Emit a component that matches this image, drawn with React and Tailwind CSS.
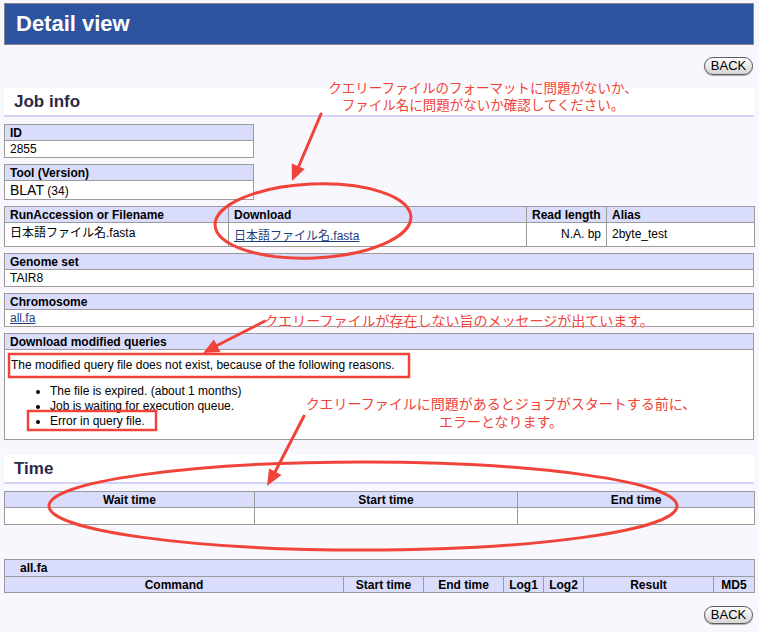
import React from 'react';

const th = 'border border-[#9b9b9b] bg-[#d9dcfa] text-[12px] font-bold text-black h-[16px] leading-[14px] p-0 align-middle';
const td = 'border border-[#9b9b9b] bg-white text-[12px] text-black h-[17px] leading-[14px] p-0 align-middle';
const red = 'text-[#f0443a] [text-shadow:0_0_2px_#fff,0_0_2px_#fff]';
const jp = "font-['Noto_Sans_CJK_JP',sans-serif]";

function SectionTitle({ children, className = '' }) {
  return (
    <div className={`bg-white border-b-2 border-[#d3d4f7] h-[29px] flex items-center pl-[10px] text-[17px] font-bold text-[#2a2a48] ${className}`}>
      {children}
    </div>
  );
}

function BackButton({ className = '' }) {
  return (
    <div className={`flex justify-end pr-[1px] ${className}`}>
      <button className="h-[18px] w-[49px] rounded-full border border-[#5c5c5c] bg-linear-to-b from-white to-[#d6d6d6] text-[13px] leading-[16px] text-black shadow-[0_1px_1px_rgba(0,0,0,0.3)]">
        BACK
      </button>
    </div>
  );
}

function Field({ label, children, wide = false, className = '', rowClass = '' }) {
  return (
    <table className={`border-collapse table-fixed ${wide ? 'w-[750px]' : 'w-[250px]'} ${className}`}>
      <tbody>
        <tr>
          <th className={`${th} text-left pl-[5px]`}>{label}</th>
        </tr>
        <tr>
          <td className={`${td} pl-[5px] ${rowClass}`}>{children}</td>
        </tr>
      </tbody>
    </table>
  );
}

function Annotations() {
  return (
    <>
      <svg className="absolute left-0 top-0 pointer-events-none" width="759" height="632" viewBox="0 0 759 632">
        <g fill="none" stroke="#f0443a" strokeWidth="3" strokeLinecap="round">
          <ellipse cx="313" cy="221" rx="98" ry="37" transform="rotate(-2.5 313 221)" />
          <ellipse cx="363" cy="506" rx="314" ry="44" />
          <line x1="321" y1="114" x2="298" y2="168" />
          <line x1="265" y1="321" x2="216" y2="346" />
          <line x1="304" y1="416" x2="275" y2="472" />
        </g>
        <g fill="#f0443a">
          <polygon points="292,181 304.7,168.9 291.7,163.5" />
          <polygon points="203,353 220.4,351.9 214,339.5" />
          <polygon points="267,486 281.5,475 269.1,468.6" />
        </g>
        <g fill="none" stroke="#f0443a" strokeWidth="2.5">
          <rect x="9" y="354" width="400" height="23" />
          <rect x="28" y="411" width="128" height="19" />
        </g>
      </svg>
      <div className={`absolute left-[283px] top-[79px] w-[400px] text-center text-[13.5px] leading-[17px] ${red} ${jp}`}>
        <div className="h-[17px]">クエリーファイルのフォーマットに問題がないか、</div>
        <div className="h-[17px]">ファイル名に問題がないか確認してください。</div>
      </div>
      <div className={`absolute left-[259px] top-[312px] w-[400px] text-center text-[14px] leading-[17px] ${red} ${jp}`}>
        クエリーファイルが存在しない旨のメッセージが出ています。
      </div>
      <div className={`absolute left-[301px] top-[394px] w-[400px] text-center text-[14px] leading-[18px] ${red} ${jp}`}>
        <div className="h-[18px]">クエリーファイルに問題があるとジョブがスタートする前に、</div>
        <div className="h-[18px]">エラーとなります。</div>
      </div>
    </>
  );
}

export default function App() {
  return (
    <div className="relative w-[759px] min-h-[632px] bg-[#f7f7fd] pt-[3px] font-['Liberation_Sans','Noto_Sans_CJK_JP',sans-serif] text-black">
      <div className="ml-[4px] w-[750px]">
        <div className="h-[42px] bg-[#2d52a0] border border-[#858585] flex items-center pl-[11px]">
          <h1 className="text-[22px] font-bold text-white leading-none">Detail view</h1>
        </div>

        <BackButton className="mt-[12px]" />

        <SectionTitle className="mt-[13px]">Job info</SectionTitle>

        <Field label="ID" className="mt-[7px]">2855</Field>

        <Field label="Tool (Version)" className="mt-[6px]" rowClass="!h-[19px]">
          <span className="text-[14px]">BLAT</span> <span className="text-[12px]">(34)</span>
        </Field>

        <table className="border-collapse table-fixed w-[750px] mt-[6px]">
          <colgroup>
            <col className="w-[224px]" />
            <col className="w-[298px]" />
            <col className="w-[80px]" />
            <col className="w-[148px]" />
          </colgroup>
          <tbody>
            <tr>
              <th className={`${th} text-left pl-[5px]`}>RunAccession or Filename</th>
              <th className={`${th} text-left pl-[5px]`}>Download</th>
              <th className={`${th} text-left pl-[5px]`}>Read length</th>
              <th className={`${th} text-left pl-[5px]`}>Alias</th>
            </tr>
            <tr>
              <td className={`${td} !h-[24px] !align-top pl-[5px] pt-[3px]`}>日本語ファイル名.fasta</td>
              <td className={`${td} !h-[24px] !align-top pl-[5px] pt-[6px]`}>
                <a href="#" className="text-[#1d3c7e] underline">日本語ファイル名.fasta</a>
              </td>
              <td className={`${td} !h-[24px] !align-top text-right pr-[5px] pt-[4px]`}>N.A. bp</td>
              <td className={`${td} !h-[24px] !align-top pl-[5px] pt-[4px]`}>2byte_test</td>
            </tr>
          </tbody>
        </table>

        <Field label="Genome set" wide className="mt-[6px]">TAIR8</Field>

        <Field label="Chromosome" wide className="mt-[6px]">
          <a href="#" className="text-[#1d3c7e] underline">all.fa</a>
        </Field>

        <table className="border-collapse table-fixed w-[750px] mt-[6px]">
          <tbody>
            <tr>
              <th className={`${th} text-left pl-[5px]`}>Download modified queries</th>
            </tr>
            <tr>
              <td className={`${td} !h-[90px] !align-top pl-[6px]`}>
                <p className="pt-[8px] leading-[14px]">The modified query file does not exist, because of the following reasons.</p>
                <ul className="list-disc pl-[39px] mt-[12px] leading-[15px]">
                  <li>The file is expired. (about 1 months)</li>
                  <li>Job is waiting for execution queue.</li>
                  <li>Error in query file.</li>
                </ul>
              </td>
            </tr>
          </tbody>
        </table>

        <SectionTitle className="mt-[15px]">Time</SectionTitle>

        <table className="border-collapse table-fixed w-[750px] mt-[7px]">
          <colgroup>
            <col className="w-[250px]" />
            <col className="w-[263px]" />
            <col className="w-[237px]" />
          </colgroup>
          <tbody>
            <tr>
              <th className={`${th} text-center`}>Wait time</th>
              <th className={`${th} text-center`}>Start time</th>
              <th className={`${th} text-center`}>End time</th>
            </tr>
            <tr>
              <td className={td}></td>
              <td className={td}></td>
              <td className={td}></td>
            </tr>
          </tbody>
        </table>

        <table className="border-collapse table-fixed w-[750px] mt-[34px]">
          <colgroup>
            <col className="w-[339px]" />
            <col className="w-[80px]" />
            <col className="w-[80px]" />
            <col className="w-[40px]" />
            <col className="w-[40px]" />
            <col className="w-[130px]" />
            <col className="w-[41px]" />
          </colgroup>
          <tbody>
            <tr>
              <th colSpan={7} className={`${th} !h-[17px] text-left pl-[15px]`}>all.fa</th>
            </tr>
            <tr>
              <th className={`${th} text-center`}>Command</th>
              <th className={`${th} text-center`}>Start time</th>
              <th className={`${th} text-center`}>End time</th>
              <th className={`${th} text-center`}>Log1</th>
              <th className={`${th} text-center`}>Log2</th>
              <th className={`${th} text-center`}>Result</th>
              <th className={`${th} text-center`}>MD5</th>
            </tr>
          </tbody>
        </table>

        <BackButton className="mt-[13px] pb-[8px]" />
      </div>

      <Annotations />
    </div>
  );
}
